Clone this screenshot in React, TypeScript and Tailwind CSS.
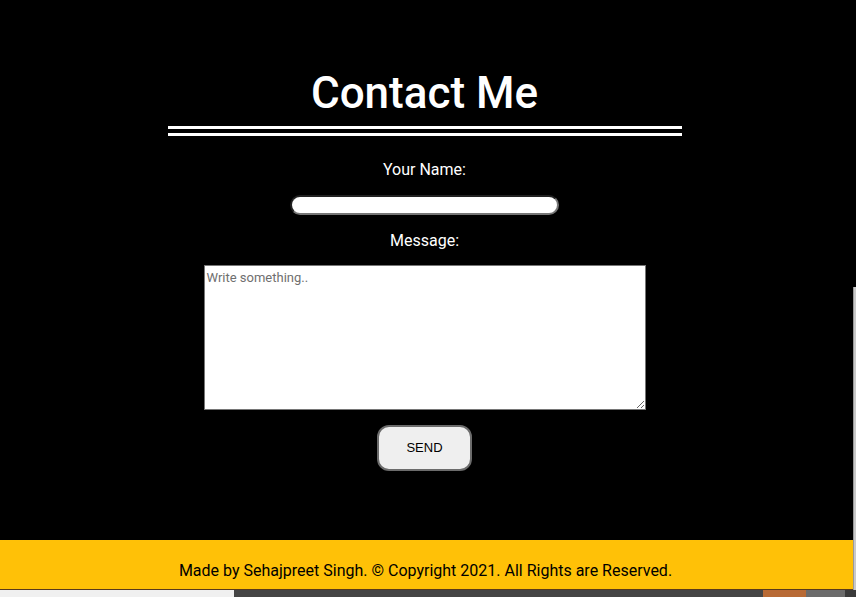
import React from "react";

export default function App() {
  return (
    <div className="w-[856px] h-[597px] overflow-hidden bg-black flex flex-col" style={{ fontFamily: "Roboto, 'Liberation Sans', sans-serif" }}>
      <div className="flex h-[590px]">
        <div className="flex-1 flex flex-col">
          <main className="h-[540px] flex flex-col items-center pt-[67px] pr-[4px] text-white">
            <h1 className="text-[44px] leading-[52px] font-medium">Contact Me</h1>
            <div className="w-[514px] mt-[7px] flex flex-col gap-[4px]">
              <div className="h-[3px] bg-white" />
              <div className="h-[3px] bg-white" />
            </div>
            <label className="mt-[24px] text-[16px] leading-[19px]">Your Name:</label>
            <input
              type="text"
              className="mt-[16px] w-[269px] h-[20px] rounded-full bg-white border-2 border-[#767676] [border-style:inset] outline-none"
            />
            <label className="mt-[16px] text-[16px] leading-[19px]">Message:</label>
            <textarea
              placeholder="Write something.."
              className="mt-[15px] w-[442px] h-[145px] bg-white border border-[#767676] px-[2px] py-[2px] text-[13px] text-black placeholder:text-[#6f6f6f] outline-none"
            />
            <button className="mt-[15px] w-[95px] h-[46px] rounded-[12px] bg-[#efefef] border-2 border-[#6b6b6b] text-black text-[13px]" style={{ fontFamily: "'Liberation Sans', Arial, sans-serif" }}>
              SEND
            </button>
          </main>
          <footer className="h-[50px] bg-[#ffc107] flex items-center justify-center pt-[12px] border-b border-[#5a3a1a]">
            <p className="text-[16px] text-black -translate-x-[1px]">
              Made by Sehajpreet Singh. © Copyright 2021. All Rights are Reserved.
            </p>
          </footer>
        </div>
        <div className="w-[3px] flex flex-col">
          <div className="h-[287px] bg-black" />
          <div className="flex-1 bg-[#c9c9c9] border-l border-[#9a9a9a]" />
        </div>
      </div>
      <div className="h-[7px] flex">
        <div className="w-[234px] bg-[#f0f0f0]" />
        <div className="w-[529px] bg-[#454545]" />
        <div className="w-[43px] bg-[#b86a35]" />
        <div className="w-[39px] bg-[#6b6b6b]" />
        <div className="flex-1 bg-[#3a3a3a]" />
      </div>
    </div>
  );
}
